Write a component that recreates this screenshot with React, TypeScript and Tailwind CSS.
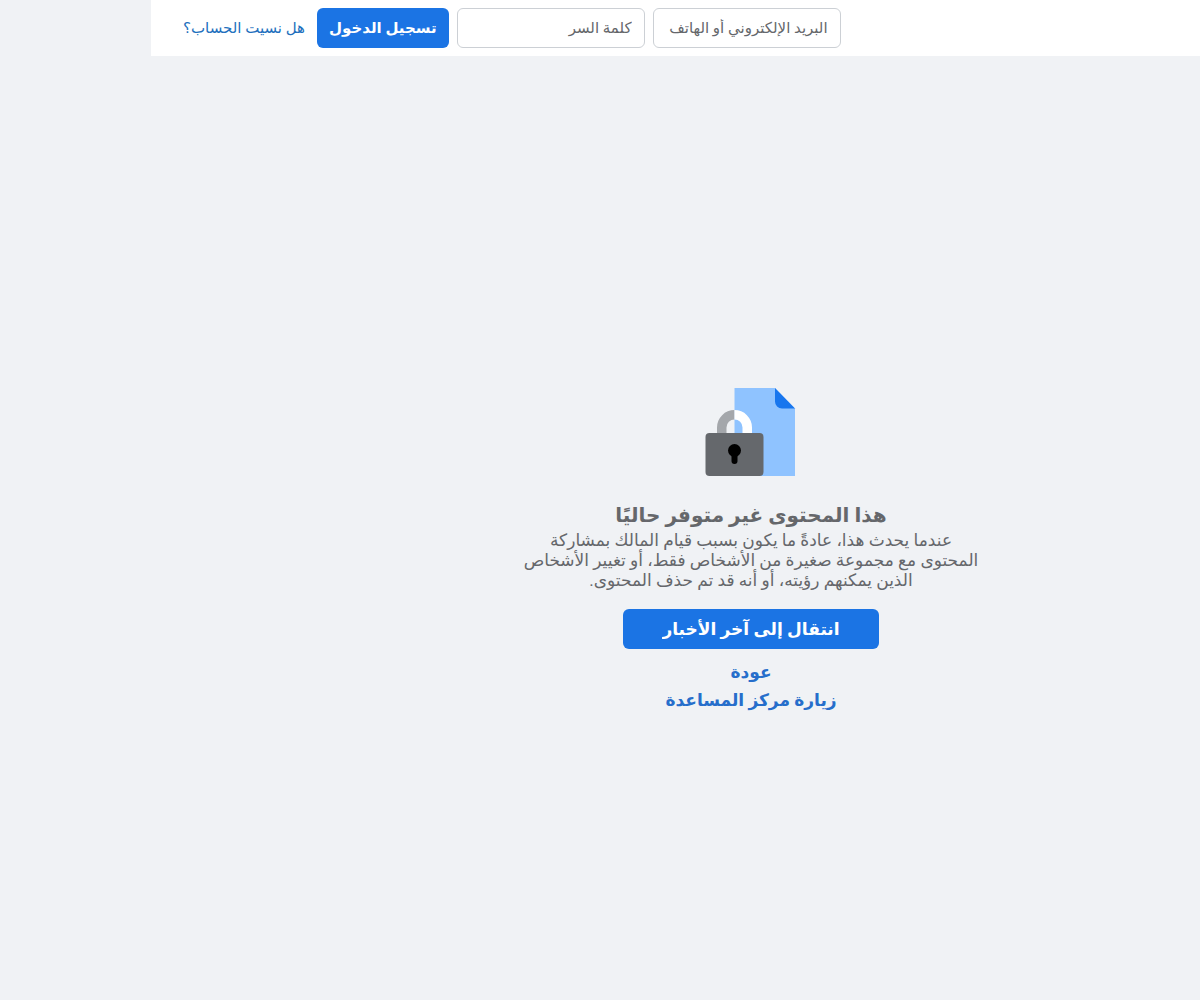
import { useState } from 'react';
import type { FormEvent } from 'react';

const LockedDocument = () => (
  <svg width="92" height="88" viewBox="0 0 92 88" aria-hidden="true">
    <path d="M29.500 0H70l20 20.500V88H29.500z" fill="#8fc3ff" />
    <path d="M70 0l20 20.500H77a7 7 0 0 1-7-7z" fill="#1876ee" />
    <path d="M12 46V39.500A17.500 17.500 0 0 1 29.500 22v9.500a8 8 0 0 0-8 8V46z" fill="#a4a7ab" />
    <path d="M47 46V39.500A17.500 17.500 0 0 0 29.500 22v9.500a8 8 0 0 1 8 8V46z" fill="#fff" />
    <rect x="0.500" y="45" width="58" height="43" rx="4" fill="#65686c" />
    <circle cx="29.500" cy="62.500" r="6.500" />
    <rect x="26.500" y="62" width="6" height="14" rx="3" />
  </svg>
);

const LoginBar = () => {
  const [email, setEmail] = useState('');
  const [password, setPassword] = useState('');

  const handleSubmit = (e: FormEvent) => {
    e.preventDefault();
  };

  const field =
    'h-10 w-47 rounded-md border border-[#ccd0d5] bg-white px-3 text-[15px] text-[#1c1e21] outline-none placeholder:text-[#65676b]';

  return (
    <header className="bg-white">
      <form onSubmit={handleSubmit} className="flex h-14 items-center justify-end gap-2 pl-8">
        <input
          type="text"
          aria-label="البريد الإلكتروني أو الهاتف"
          placeholder="البريد الإلكتروني أو الهاتف"
          className={field}
          value={email}
          onChange={(e) => setEmail(e.target.value)}
        />
        <input
          type="password"
          aria-label="كلمة السر"
          placeholder="كلمة السر"
          className={field}
          value={password}
          onChange={(e) => setPassword(e.target.value)}
        />
        <button type="submit" className="h-10 rounded-md bg-[#1b74e4] px-3 text-[15px] font-bold text-white">
          تسجيل الدخول
        </button>
        <a href="#" className="mr-1 text-[15px] text-[#216fbd]">
          هل نسيت الحساب؟
        </a>
      </form>
    </header>
  );
};

const App = () => (
  <div
    dir="rtl"
    className="flex min-h-screen flex-col bg-[#f0f2f5] pl-[151px] font-['Roboto','DejaVu_Sans',sans-serif]"
  >
    <LoginBar />
    <main className="mt-[332px] flex flex-col items-center pl-[151px] text-center text-[#65676b]">
      <LockedDocument />
      <h1 className="mt-[27px] text-[20px] leading-6 font-bold">هذا المحتوى غير متوفر حاليًا</h1>
      <p className="mt-[3px] max-w-[460px] text-[17px] leading-5">
        عندما يحدث هذا، عادةً ما يكون بسبب قيام المالك بمشاركة المحتوى مع مجموعة صغيرة من الأشخاص فقط، أو
        تغيير الأشخاص الذين يمكنهم رؤيته، أو أنه قد تم حذف المحتوى.
      </p>
      <button
        type="button"
        className="mt-[19px] flex h-10 w-64 items-center justify-center rounded-md bg-[#1b74e4] text-[17px] font-bold text-white"
      >
        <span className="overflow-hidden leading-5">انتقال إلى آخر الأخبار</span>
      </button>
      <a href="#" className="mt-[13px] text-[17px] leading-5 font-bold text-[#266ecb]">
        عودة
      </a>
      <a href="#" className="mt-2 text-[17px] leading-5 font-bold text-[#266ecb]">
        زيارة مركز المساعدة
      </a>
    </main>
  </div>
);

export default App;
